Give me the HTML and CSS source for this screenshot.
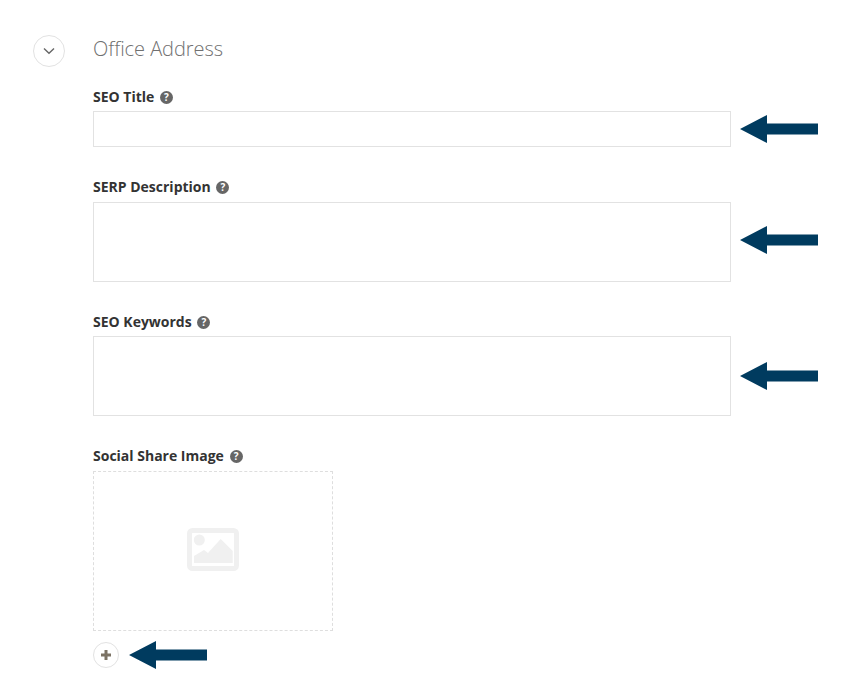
FILE: index.html
```html
<!DOCTYPE html>
<html lang="en">
<head>
    <meta charset="UTF-8">
    <meta name="viewport" content="width=device-width, initial-scale=1.0">
    <title>Office Address</title>
    <link rel="stylesheet" href="styles.css">
</head>
<body>

    <div class="section">
        <button class="toggle">
            <svg width="12" height="8" viewBox="0 0 12 8"><path d="M1 1.5 L6 6.2 L11 1.5" fill="none" stroke="#666" stroke-width="1.4"/></svg>
        </button>

        <div class="section-body">
            <h2>Office Address</h2>

            <div class="field">
                <label class="label-tight">SEO Title <span class="help">?</span></label>
                <div class="control">
                    <input type="text">
                    <svg class="arrow" width="78" height="28" viewBox="0 0 78 28"><path d="M0 14 L27 0 V8.5 H78 V19.5 H27 V28 Z" fill="#003b5f"/></svg>
                </div>
            </div>

            <div class="field">
                <label>SERP Description <span class="help">?</span></label>
                <div class="control">
                    <textarea></textarea>
                    <svg class="arrow arrow-high" width="78" height="28" viewBox="0 0 78 28"><path d="M0 14 L27 0 V8.5 H78 V19.5 H27 V28 Z" fill="#003b5f"/></svg>
                </div>
            </div>

            <div class="field">
                <label class="label-tight">SEO Keywords <span class="help">?</span></label>
                <div class="control">
                    <textarea></textarea>
                    <svg class="arrow" width="78" height="28" viewBox="0 0 78 28"><path d="M0 14 L27 0 V8.5 H78 V19.5 H27 V28 Z" fill="#003b5f"/></svg>
                </div>
            </div>

            <div class="field">
                <label>Social Share Image <span class="help">?</span></label>
                <div class="image-box">
                    <svg width="52" height="43" viewBox="0 0 52 43">
                        <rect x="2.5" y="2.5" width="47" height="38" rx="3" fill="none" stroke="#f0f0f0" stroke-width="5"/>
                        <circle cx="12.3" cy="12" r="5.5" fill="#f0f0f0"/>
                        <path d="M7 35 V28 L17 22 L21 25 L33.7 11 L45.7 23 V35 Z" fill="#f0f0f0"/>
                    </svg>
                </div>
            </div>

            <div class="add-row">
                <button class="add">
                    <svg width="12" height="12" viewBox="0 0 12 12"><path d="M6 1 V11 M1 6 H11" stroke="#7b7264" stroke-width="3"/></svg>
                </button>
                <svg width="78" height="28" viewBox="0 0 78 28"><path d="M0 14 L27 0 V8.5 H78 V19.5 H27 V28 Z" fill="#003b5f"/></svg>
            </div>
        </div>
    </div>

</body>
</html>
```

FILE: styles.css
```css
body {
    font-family: "Open Sans", sans-serif;
    background-color: #fff;
    color: #333;
    margin: 0;
    padding: 35px 0 0 33px;
}

.section {
    display: flex;
    gap: 28px;
    align-items: flex-start;
}

.toggle {
    width: 32px;
    height: 32px;
    padding: 0;
    background: #fff;
    border: 1px solid #e2e2e2;
    border-radius: 50%;
    display: flex;
    align-items: center;
    justify-content: center;
}

.section-body {
    width: 638px;
}

h2 {
    margin: 0 0 -6px;
    font-size: 20px;
    font-weight: 300;
    line-height: 28px;
    letter-spacing: -0.05px;
    color: #707070;
}

.field {
    margin-top: 30px;
}

label {
    display: block;
    font-size: 14px;
    font-weight: 700;
    line-height: 20px;
    margin-bottom: 5px;
    color: #333;
}

.label-tight {
    margin-bottom: 4px;
}

.help {
    display: inline-block;
    width: 13px;
    height: 13px;
    margin-left: 2px;
    border-radius: 50%;
    background-color: #666;
    color: #fff;
    font-size: 10px;
    line-height: 13px;
    text-align: center;
    vertical-align: 1px;
}

.control {
    position: relative;
}

input,
textarea {
    display: block;
    box-sizing: border-box;
    width: 100%;
    margin: 0;
    padding: 6px 10px;
    background: #fff;
    border: 1px solid #e2e2e2;
    resize: none;
    outline: none;
}

input {
    height: 36px;
}

textarea {
    height: 80px;
}

.arrow {
    position: absolute;
    left: 647px;
    top: 50%;
    margin-top: -14px;
}

.arrow-high {
    margin-top: -16px;
}

.image-box {
    box-sizing: border-box;
    width: 240px;
    height: 160px;
    border: 1px dashed #dedede;
    display: flex;
    align-items: center;
    justify-content: center;
}

.image-box svg {
    margin-bottom: 3px;
}

.add-row {
    margin-top: 10px;
    display: flex;
    align-items: flex-start;
    gap: 10px;
}

.add {
    width: 26px;
    height: 26px;
    margin-top: 1px;
    padding: 0;
    background: #fff;
    border: 1px solid #e2e2e2;
    border-radius: 50%;
    display: flex;
    align-items: center;
    justify-content: center;
}
```
